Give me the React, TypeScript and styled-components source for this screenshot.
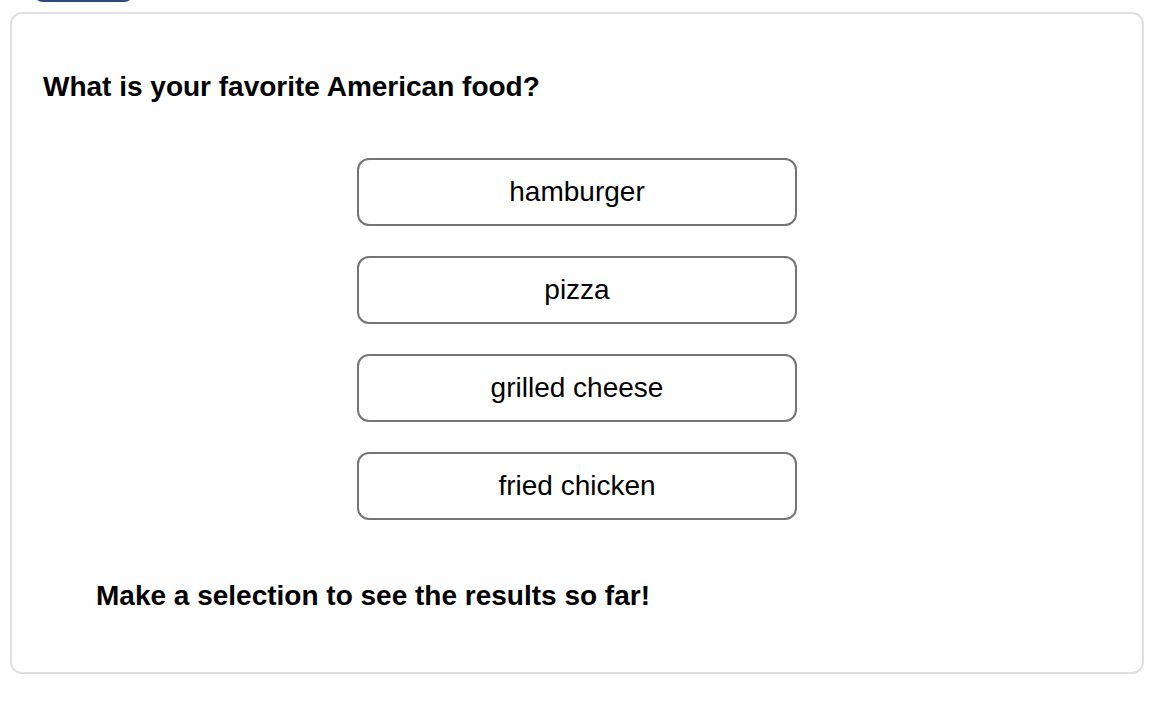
import React, { useState } from 'react'
import styled, { createGlobalStyle } from 'styled-components'

const options = ['hamburger', 'pizza', 'grilled cheese', 'fried chicken']

const Poll = () => {
   const [picked, setPicked] = useState<string | null>(null)
   return (
      <Page>
         <GlobalStyle />
         <TopButton aria-label="back" />
         <Card>
            <Question>What is your favorite American food?</Question>
            <Choices>
               {options.map((label) => (
                  <Choice key={label} active={picked === label} onClick={() => setPicked(label)}>
                     {label}
                  </Choice>
               ))}
            </Choices>
            <Hint>Make a selection to see the results so far!</Hint>
         </Card>
      </Page>
   )
}

const GlobalStyle = createGlobalStyle`
   body {
      margin: 0;
      background: #fff;
      font-family: 'Liberation Sans', Arial, sans-serif;
      color: #000;
   }
`
const Page = styled('div')`
   padding: 0 16px 0 10px;
`
const TopButton = styled('button')`
   display: block;
   width: 101px;
   height: 40px;
   margin: -38px 0 10px 23px;
   border: none;
   border-radius: 0 0 10px 10px;
   background: #2b4b7e;
`
const Card = styled('section')`
   box-sizing: border-box;
   width: 1134px;
   height: 662px;
   border: 2px solid #e0e0e0;
   border-radius: 12px;
   background: #fefefe;
   padding: 57px 0 0;
`
const Question = styled('h2')`
   margin: 0 0 55px;
   padding-left: 31px;
   font-size: 28px;
   font-weight: bold;
`
const Choices = styled('div')`
   display: flex;
   flex-direction: column;
   align-items: center;
   gap: 30px;
`
const Choice = styled('button')<{ active?: boolean }>`
   box-sizing: border-box;
   width: 440px;
   height: 68px;
   border: 2px solid #757575;
   border-radius: 12px;
   background: ${(p) => (p.active ? '#eef3fb' : '#fff')};
   font-family: 'Liberation Sans', Arial, sans-serif;
   font-size: 28px;
   color: #000;
   cursor: pointer;
`
const Hint = styled('p')`
   margin: 60px 0 0;
   padding-left: 84px;
   font-size: 28px;
   font-weight: bold;
`

export default Poll
